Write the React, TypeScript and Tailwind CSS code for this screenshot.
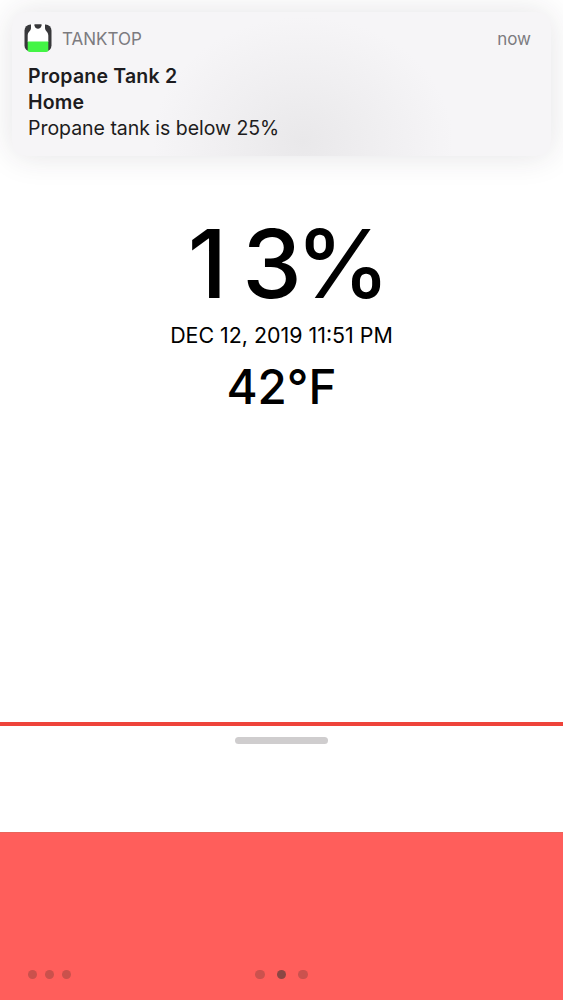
const MENU_DOTS = [0, 1, 2];
const PAGES = [0, 1, 2];
const ACTIVE_PAGE = 1;

function TankIcon() {
  return (
    <svg width="28" height="28" viewBox="0 0 28 28" className="shrink-0">
      <rect x="0.5" y="0.5" width="27" height="27" rx="6" fill="#38383b" />
      <path d="M7 0H10.5C10.5 2.8 11.8 4.6 14 4.6S17.5 2.8 17.5 0H21V4C21 7.3 24.3 7.4 24.3 11.5V18H3.7V11.5C3.7 7.4 7 7.3 7 4Z" fill="#fff" />
      <path d="M10.5 0.5H17.5C17.5 3 16.2 4.6 14 4.6S10.5 3 10.5 0.5Z" fill="#38383b" />
      <path d="M3.7 17.5H24.3V27C23.5 27.7 22.5 28 21 28H7C5.5 28 4.5 27.7 3.7 27Z" fill="#43f545" />
    </svg>
  );
}

function Notification() {
  return (
    <section className="mx-3 h-36 rounded-[14px] bg-[#f6f5f7] bg-[radial-gradient(ellipse_150px_125px_at_54%_90%,#e9e8ea_0%,#efeef0_45%,#f6f5f7_100%)] px-3 pt-3 shadow-[0_0_32px_rgba(50,40,55,0.13)]">
      <header className="flex h-7 items-center pr-2 text-[17px] text-[#7c7b7f]">
        <TankIcon />
        <span className="relative top-[2px] ml-[10px] flex-1">TANKTOP</span>
        <time className="relative top-[2px]">now</time>
      </header>
      <div className="mt-[11px] pl-1 text-[19.5px] leading-[26px] text-[#1d1c20]">
        <p className="font-semibold tracking-[0.2px]">Propane Tank 2</p>
        <p className="font-semibold tracking-[0.2px]">Home</p>
        <p className="tracking-[-0.03px]">Propane tank is below 25%</p>
      </div>
    </section>
  );
}

function Reading() {
  return (
    <section className="flex flex-col items-center whitespace-nowrap text-black">
      <h1 className="h-[116px] pl-[14px] text-[95px] leading-[116px] font-medium">
        <span className="tracking-[15px]">1</span>
        <span className="tracking-[-6px]">3</span>
        <span className="tracking-[-1px]">%</span>
      </h1>
      <p className="text-[21.4px] leading-[26px]">DEC 12, 2019 11:51 PM</p>
      <p className="mt-[9px] text-[47.5px] leading-[60px] font-medium">42°F</p>
    </section>
  );
}

export default function App() {
  return (
    <main className="flex h-[1000px] w-full flex-col overflow-hidden bg-white pt-3 font-['Inter',sans-serif]">
      <Notification />
      <div className="mt-[50px] h-[516px]">
        <Reading />
      </div>
      <div className="flex h-[110px] flex-col items-center border-t-4 border-[#ee433a] pt-[11px]">
        <div className="h-[7px] w-[93px] rounded-full bg-[#cfcdce]" />
      </div>
      <footer className="grid flex-1 grid-cols-3 items-end border-t border-[#e8655a] bg-[#ff5e5b] pb-[21px]">
        <div className="flex gap-2 pl-7">
          {MENU_DOTS.map((dot) => (
            <span key={dot} className="size-[9px] rounded-full bg-[#ca514c]" />
          ))}
        </div>
        <div className="flex justify-center gap-3">
          {PAGES.map((page) => (
            <span
              key={page}
              className={page === ACTIVE_PAGE ? 'size-[9.5px] rounded-full bg-[#8b4744]' : 'size-[9.5px] rounded-full bg-[#cb524e]'}
            />
          ))}
        </div>
      </footer>
    </main>
  );
}
